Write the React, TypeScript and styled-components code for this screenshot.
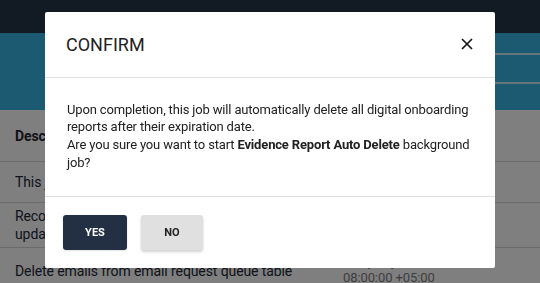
import React from "react";
import styled, { createGlobalStyle } from "styled-components";

const GlobalStyle = createGlobalStyle`
	html, body {
		margin: 0;
		padding: 0;
		width: 540px;
		height: 283px;
		overflow: hidden;
		font-family: Roboto, "Liberation Sans", Arial, sans-serif;
		background: #ffffff;
	}
	* {
		box-sizing: border-box;
	}
`;

const Page = styled.div`
	display: flex;
	flex-direction: column;
	width: 540px;
	height: 283px;
	overflow: hidden;
`;

const TopNav = styled.div`
	flex-shrink: 0;
	height: 33px;
	background: #243448;
`;

const Banner = styled.div`
	flex-shrink: 0;
	display: flex;
	justify-content: flex-end;
	height: 77px;
	background: #37b5e1;
`;

const BannerMenu = styled.div`
	display: flex;
	flex-direction: column;
	width: 60px;
	padding-top: 20px;
`;

const BannerItem = styled.div`
	height: 34px;
	border-top: 2px solid rgba(255, 255, 255, 0.75);
`;

const Table = styled.div`
	flex-shrink: 0;
	display: flex;
	flex-direction: column;
	color: #222733;
	font-size: 14px;
	letter-spacing: -0.1px;
`;

const Row = styled.div<{ $height: number; $head?: boolean }>`
	flex-shrink: 0;
	display: grid;
	grid-template-columns: 328px 1fr;
	align-items: center;
	height: ${p => p.$height}px;
	padding: 0 15px;
	border-bottom: 1px solid #d6d6d6;
	font-weight: ${p => (p.$head ? 700 : 400)};
	line-height: 18px;
`;

const Cell = styled.div`
	overflow: hidden;
	white-space: nowrap;
`;

const TimeCell = styled.div`
	font-size: 13px;
	line-height: 16px;
	color: #7c7c7c;
	margin-top: -1px;
`;

const Overlay = styled.div`
	position: fixed;
	inset: 0;
	display: flex;
	justify-content: center;
	align-items: flex-start;
	padding-top: 12px;
	background: rgba(0, 0, 0, 0.5);
`;

const Modal = styled.div`
	width: 450px;
	height: 256px;
	background: #ffffff;
	border-radius: 2px;
	display: flex;
	flex-direction: column;
	color: #212121;
`;

const ModalHeader = styled.div`
	display: flex;
	align-items: center;
	justify-content: space-between;
	height: 66px;
	padding: 0 22px 0 21px;
	border-bottom: 1px solid #e0e0e0;
`;

const Title = styled.h2`
	margin: 0;
	font-size: 18px;
	font-weight: 400;
	padding-top: 1px;
`;

const CloseButton = styled.button`
	display: flex;
	align-items: center;
	justify-content: center;
	width: 24px;
	height: 24px;
	padding: 0;
	margin-right: -6px;
	border: 0;
	background: transparent;
	color: #111;
`;

const ModalBody = styled.div`
	padding: 23px 16px 0 22px;
	height: 120px;
	border-bottom: 1px solid #e0e0e0;
	font-size: 13px;
	letter-spacing: -0.16px;
	line-height: 17.7px;
	white-space: nowrap;
`;

const ModalFooter = styled.div`
	display: flex;
	gap: 14px;
	padding: 18px 18px;
`;

const Button = styled.button<{ $primary?: boolean }>`
	height: 35px;
	min-width: ${p => (p.$primary ? 64 : 62)}px;
	border: 0;
	border-radius: 3px;
	font-family: Roboto, "Liberation Sans", Arial, sans-serif;
	font-size: 11px;
	font-weight: 700;
	text-transform: uppercase;
	background: ${p => (p.$primary ? "#233043" : "#e0e0e0")};
	color: ${p => (p.$primary ? "#ffffff" : "#222222")};
	box-shadow: ${p => (p.$primary ? "0 1px 2px rgba(0, 0, 0, 0.12)" : "0 2px 3px rgba(0, 0, 0, 0.18)")};
`;

export default function App() {
	return (
		<>
			<GlobalStyle />
			<Page>
				<TopNav />
				<Banner>
					<BannerMenu>
						<BannerItem />
						<BannerItem />
					</BannerMenu>
				</Banner>
				<Table>
					<Row $height={52} $head>
						<Cell>Description</Cell>
						<Cell />
					</Row>
					<Row $height={41}>
						<Cell>This job removes expired reports</Cell>
						<Cell />
					</Row>
					<Row $height={45}>
						<Cell>
							Records onboarding status
							<br />
							updates
						</Cell>
						<Cell />
					</Row>
					<Row $height={46}>
						<Cell>Delete emails from email request queue table</Cell>
						<TimeCell>
							Every day at
							<br />
							08:00:00 +05:00
						</TimeCell>
					</Row>
				</Table>
			</Page>
			<Overlay>
				<Modal>
					<ModalHeader>
						<Title>CONFIRM</Title>
						<CloseButton aria-label="close">
							<svg width="12" height="12" viewBox="0 0 12 12">
								<path d="M1 1 L11 11 M11 1 L1 11" stroke="currentColor" strokeWidth="1.6" />
							</svg>
						</CloseButton>
					</ModalHeader>
					<ModalBody>
						Upon completion, this job will automatically delete all digital onboarding
						<br />
						reports after their expiration date.
						<br />
						Are you sure you want to start <b>Evidence Report Auto Delete</b> background
						<br />
						job?
					</ModalBody>
					<ModalFooter>
						<Button $primary>Yes</Button>
						<Button>No</Button>
					</ModalFooter>
				</Modal>
			</Overlay>
		</>
	);
}
